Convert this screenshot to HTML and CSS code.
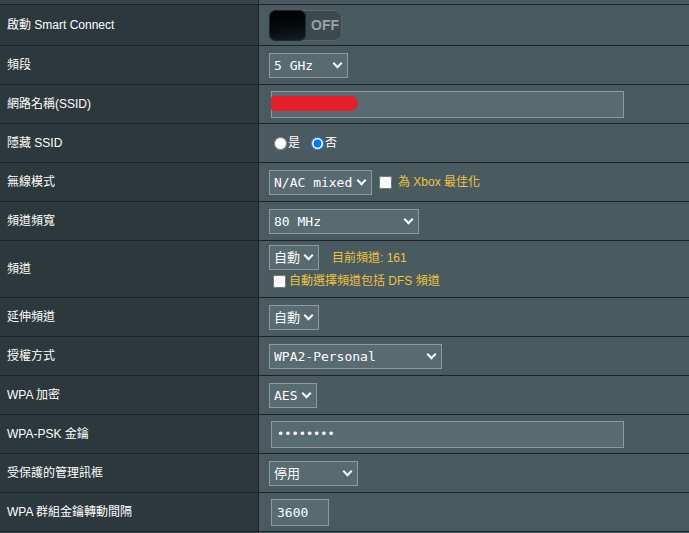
FILE: index.html
```html
<!DOCTYPE html>
<html lang="zh-TW">
<head>
    <meta charset="UTF-8">
    <meta name="viewport" content="width=device-width, initial-scale=1.0">
    <title>無線 - 一般設定</title>
    <link rel="stylesheet" href="styles.css">
</head>

<body>
<div class="form-table">
    <div class="row row-stub">
        <div class="th"></div>
        <div class="td"></div>
    </div>

    <div class="row row-tall">
        <div class="th">啟動 Smart Connect</div>
        <div class="td">
            <div class="switch">
                <span class="knob"></span>
                <span class="switch-label">OFF</span>
            </div>
        </div>
    </div>

    <div class="row">
        <div class="th">頻段</div>
        <div class="td">
            <span class="select-box">
                <select class="w-band">
                    <option>2.4 GHz</option>
                    <option selected>5 GHz</option>
                </select>
            </span>
        </div>
    </div>

    <div class="row">
        <div class="th">網路名稱(SSID)</div>
        <div class="td">
            <span class="input-wrap">
                <input type="text" class="text-input input-wide" value="">
                <span class="redact"></span>
            </span>
        </div>
    </div>

    <div class="row">
        <div class="th">隱藏 SSID</div>
        <div class="td">
            <label class="radio"><input type="radio" name="hide_ssid">是</label>
            <label class="radio"><input type="radio" name="hide_ssid" checked>否</label>
        </div>
    </div>

    <div class="row">
        <div class="th">無線模式</div>
        <div class="td">
            <span class="select-box gap-right">
                <select class="w-mode">
                    <option>Auto</option>
                    <option selected>N/AC mixed</option>
                    <option>Legacy</option>
                </select>
            </span>
            <input type="checkbox" class="check">
            <span class="hint">為 Xbox 最佳化</span>
        </div>
    </div>

    <div class="row">
        <div class="th">頻道頻寬</div>
        <div class="td">
            <span class="select-box">
                <select class="w-bw">
                    <option>20/40/80 MHz</option>
                    <option>20 MHz</option>
                    <option>40 MHz</option>
                    <option selected>80 MHz</option>
                </select>
            </span>
        </div>
    </div>

    <div class="row row-channel">
        <div class="th">頻道</div>
        <div class="td td-stack">
            <div class="line">
                <span class="select-box">
                    <select class="w-auto">
                        <option selected>自動</option>
                        <option>36</option>
                        <option>161</option>
                    </select>
                </span>
                <span class="hint current">目前頻道: 161</span>
            </div>
            <div class="line line-second">
                <input type="checkbox" class="check check-dfs">
                <span class="hint">自動選擇頻道包括 DFS 頻道</span>
            </div>
        </div>
    </div>

    <div class="row">
        <div class="th">延伸頻道</div>
        <div class="td">
            <span class="select-box">
                <select class="w-auto">
                    <option selected>自動</option>
                </select>
            </span>
        </div>
    </div>

    <div class="row">
        <div class="th">授權方式</div>
        <div class="td">
            <span class="select-box">
                <select class="w-auth">
                    <option>Open System</option>
                    <option selected>WPA2-Personal</option>
                    <option>WPA-Auto-Personal</option>
                </select>
            </span>
        </div>
    </div>

    <div class="row">
        <div class="th">WPA 加密</div>
        <div class="td">
            <span class="select-box">
                <select class="w-crypto">
                    <option selected>AES</option>
                </select>
            </span>
        </div>
    </div>

    <div class="row">
        <div class="th">WPA-PSK 金鑰</div>
        <div class="td">
            <span class="input-wrap">
                <input type="password" class="text-input input-wide input-pass" value="12345678">
            </span>
        </div>
    </div>

    <div class="row">
        <div class="th">受保護的管理訊框</div>
        <div class="td">
            <span class="select-box">
                <select class="w-pmf">
                    <option selected>停用</option>
                    <option>可選</option>
                    <option>必要</option>
                </select>
            </span>
        </div>
    </div>

    <div class="row">
        <div class="th">WPA 群組金鑰轉動間隔</div>
        <div class="td">
            <span class="input-wrap">
                <input type="text" class="text-input input-short" value="3600">
            </span>
        </div>
    </div>

    <div class="row row-stub">
        <div class="th"></div>
        <div class="td"></div>
    </div>
</div>
</body>
</html>
```

FILE: styles.css
```css
body {
    margin: 0;
    background-color: #4a5b60;
    font-family: "Liberation Sans", Arial, "Noto Sans CJK TC", sans-serif;
    font-size: 12px;
    line-height: 16px;
    color: #fff;
    overflow: hidden;
}

.form-table {
    width: 100%;
}

.row {
    display: grid;
    grid-template-columns: 259px 1fr;
    height: 39px;
    box-sizing: border-box;
    border-bottom: 1px solid #1d2427;
}

.row-stub {
    height: 5px;
}

.row-stub .th {
    background-color: #3a4447;
}

.row-tall {
    height: 41px;
}

.row-channel {
    height: 57px;
}

.th {
    display: flex;
    align-items: center;
    padding-left: 7px;
    background-color: #2d383c;
    border-right: 1px solid #1d2427;
}

.td {
    display: flex;
    align-items: center;
    padding-left: 10px;
    background-color: #4a5b60;
}

/* 開關 */
.switch {
    display: flex;
    align-items: center;
    width: 73px;
    height: 31px;
    border-radius: 8px;
    background-color: #3c494d;
    box-shadow: inset 0 0 0 1px #56666b;
}

.knob {
    width: 37px;
    height: 31px;
    border-radius: 7px;
    background: linear-gradient(170deg, #000 0%, #04090b 50%, #142126 100%);
    box-shadow: inset 0 0 0 1px #1e2a2e;
}

.switch-label {
    margin-left: 5px;
    font-size: 14px;
    font-weight: bold;
    color: #98a3a6;
}

/* 下拉選單 */
.select-box {
    position: relative;
    display: inline-block;
}

.select-box::after {
    content: "";
    position: absolute;
    right: 7px;
    top: 50%;
    margin-top: -5.5px;
    width: 5px;
    height: 5px;
    border-right: 2px solid #fff;
    border-bottom: 2px solid #fff;
    transform: rotate(45deg);
    pointer-events: none;
}

.select-box select {
    display: block;
    appearance: none;
    height: 25px;
    box-sizing: border-box;
    margin: 0;
    padding: 0 0 0 4px;
    border: 1px solid #8e9a9d;
    border-radius: 0;
    background-color: #576b71;
    color: #fff;
    font-family: "DejaVu Sans Mono", "Noto Sans CJK TC", monospace;
    font-size: 13px;
}

.w-band { width: 79px; }
.w-mode { width: 103px; }
.w-bw { width: 150px; }
.w-auto { width: 50px; }
.w-auth { width: 173px; }
.w-crypto { width: 48px; }
.w-pmf { width: 89px; }

.gap-right {
    margin-right: 7px;
}

/* 輸入框 */
.input-wrap {
    position: relative;
    display: inline-block;
    margin-left: 2px;
}

.text-input {
    display: block;
    height: 27px;
    box-sizing: border-box;
    margin: 0;
    padding: 0 5px;
    border: 1px solid #8e9a9d;
    border-radius: 0;
    background-color: #576b71;
    color: #fff;
    font-family: "DejaVu Sans Mono", monospace;
    font-size: 13px;
}

.input-wide { width: 353px; }
.input-short { width: 58px; }
.input-pass { font-size: 12px; }

.redact {
    position: absolute;
    left: 0;
    top: 5px;
    width: 87px;
    height: 15px;
    border-radius: 3px 8px 8px 3px;
    background-color: #e61f2a;
    filter: blur(0.6px);
}

/* 單選、勾選 */
.radio {
    display: flex;
    align-items: center;
    margin-right: 6px;
}

.radio input {
    margin: 0 1px 0 5px;
}

.check {
    margin: 0 6px 0 0;
}

.hint {
    color: #f0c23c;
}

.td-stack {
    flex-direction: column;
    align-items: flex-start;
    justify-content: flex-start;
    padding-top: 4px;
}

.line {
    display: flex;
    align-items: center;
}

.current {
    margin-left: 13px;
}

.line-second {
    margin-top: 3px;
}

.check-dfs {
    margin: 0 3px 0 4px;
}
```
